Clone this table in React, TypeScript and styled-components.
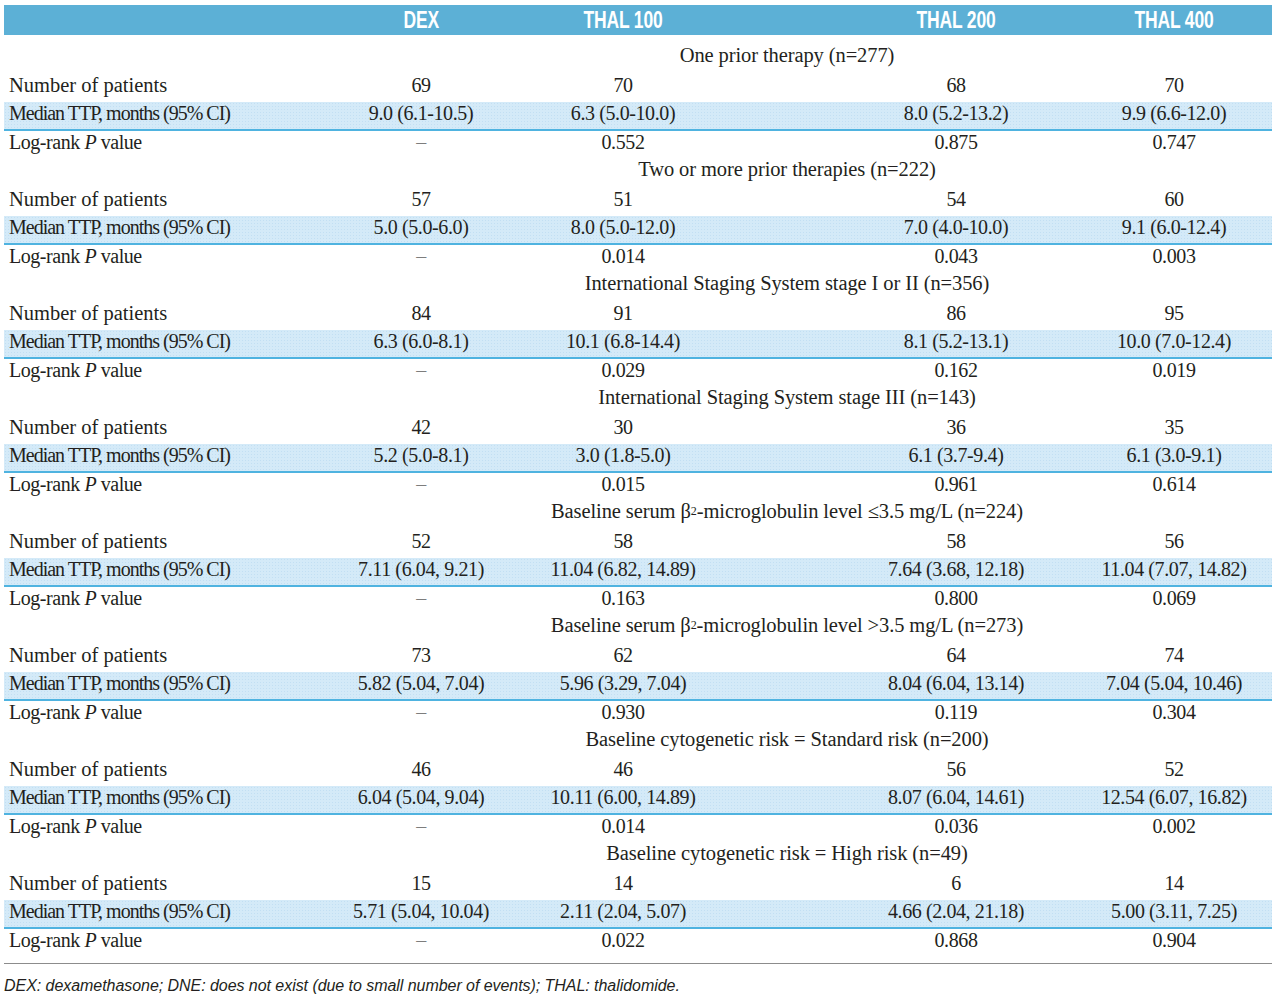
import React from "react";
import styled, { createGlobalStyle } from "styled-components";

const GlobalStyle = createGlobalStyle`
  html, body { margin: 0; padding: 0; background: #ffffff; }
  body { font-family: "Liberation Serif", "Times New Roman", serif; color: #231f20; }
`;

const COLS = "316px 202px 202px 112px 240px 196px";

const Page = styled.div`
  width: 1268px;
  padding: 5px 0 0 4px;
`;

const HeaderRow = styled.div`
  display: grid;
  grid-template-columns: ${COLS};
  height: 30px;
  background: #5cb0d6;
  align-items: center;
  margin-bottom: 10px;
`;

const HeadCell = styled.div<{ $col: number }>`
  grid-column: ${(p) => p.$col};
  text-align: center;
  line-height: 30px;
  padding-bottom: 2px;
`;

const HeadText = styled.span`
  display: inline-block;
  transform: scaleX(0.76);
  color: #ffffff;
  font-family: "Liberation Sans", Arial, sans-serif;
  font-weight: 700;
  font-size: 23px;
  letter-spacing: -0.2px;
`;

const Row = styled.div<{ $band?: boolean }>`
  display: grid;
  grid-template-columns: ${COLS};
  height: 28.5px;
  box-sizing: border-box;
  align-items: center;
  padding-bottom: 8px;
  font-size: 20px;
  background: ${(p) =>
    p.$band
      ? "radial-gradient(circle, rgba(160,205,235,0.35) 0.8px, transparent 1px) 0 0 / 3px 3px, #d4eaf8"
      : "transparent"};
  border-bottom: ${(p) => (p.$band ? "2px solid #4fb3e0" : "none")};
`;

const TitleRow = styled.div`
  height: 28.5px;
  box-sizing: border-box;
  display: flex;
  align-items: center;
  justify-content: center;
  padding: 0 0 8px 298px;
  font-size: 20.5px;
  letter-spacing: -0.1px;
  white-space: nowrap;
`;

type LabelKind = "count" | "median" | "pvalue";

const labelSpacing: Record<LabelKind, string> = {
  count: "0",
  median: "-1px",
  pvalue: "-0.45px",
};

const Label = styled.div<{ $kind: LabelKind }>`
  grid-column: 1;
  padding-left: 5px;
  white-space: nowrap;
  font-size: ${(p) => (p.$kind === "count" ? "20.5px" : "20px")};
  letter-spacing: ${(p) => labelSpacing[p.$kind]};
`;

const Value = styled.div<{ $col: number; $muted?: boolean }>`
  grid-column: ${(p) => p.$col};
  text-align: center;
  white-space: nowrap;
  letter-spacing: -0.4px;
  color: ${(p) => (p.$muted ? "#7d7d7d" : "inherit")};
`;

const Sub = styled.span`
  font-size: 12px;
  vertical-align: -2px;
`;

const Rule = styled.div`
  margin-top: 6px;
  border-top: 1px solid #8c8c8c;
`;

const Footnote = styled.p`
  margin: 0;
  padding-top: 12px;
  font-family: "Liberation Sans", Arial, sans-serif;
  font-style: italic;
  font-size: 16px;
  line-height: 20px;
  letter-spacing: -0.05px;
  color: #231f20;
`;

const DATA_COLS = [2, 3, 5, 6];

type Group = {
  title: React.ReactNode;
  n: string[];
  median: string[];
  p: string[];
};

const beta = (
  <>
    β<Sub>2</Sub>
  </>
);

const groups: Group[] = [
  {
    title: "One prior therapy (n=277)",
    n: ["69", "70", "68", "70"],
    median: ["9.0 (6.1-10.5)", "6.3 (5.0-10.0)", "8.0 (5.2-13.2)", "9.9 (6.6-12.0)"],
    p: ["0.552", "0.875", "0.747"],
  },
  {
    title: "Two or more prior therapies (n=222)",
    n: ["57", "51", "54", "60"],
    median: ["5.0 (5.0-6.0)", "8.0 (5.0-12.0)", "7.0 (4.0-10.0)", "9.1 (6.0-12.4)"],
    p: ["0.014", "0.043", "0.003"],
  },
  {
    title: "International Staging System stage I or II (n=356)",
    n: ["84", "91", "86", "95"],
    median: ["6.3 (6.0-8.1)", "10.1 (6.8-14.4)", "8.1 (5.2-13.1)", "10.0 (7.0-12.4)"],
    p: ["0.029", "0.162", "0.019"],
  },
  {
    title: "International Staging System stage III (n=143)",
    n: ["42", "30", "36", "35"],
    median: ["5.2 (5.0-8.1)", "3.0 (1.8-5.0)", "6.1 (3.7-9.4)", "6.1 (3.0-9.1)"],
    p: ["0.015", "0.961", "0.614"],
  },
  {
    title: <>Baseline serum {beta}-microglobulin level ≤3.5 mg/L (n=224)</>,
    n: ["52", "58", "58", "56"],
    median: ["7.11 (6.04, 9.21)", "11.04 (6.82, 14.89)", "7.64 (3.68, 12.18)", "11.04 (7.07, 14.82)"],
    p: ["0.163", "0.800", "0.069"],
  },
  {
    title: <>Baseline serum {beta}-microglobulin level &gt;3.5 mg/L (n=273)</>,
    n: ["73", "62", "64", "74"],
    median: ["5.82 (5.04, 7.04)", "5.96 (3.29, 7.04)", "8.04 (6.04, 13.14)", "7.04 (5.04, 10.46)"],
    p: ["0.930", "0.119", "0.304"],
  },
  {
    title: "Baseline cytogenetic risk = Standard risk (n=200)",
    n: ["46", "46", "56", "52"],
    median: ["6.04 (5.04, 9.04)", "10.11 (6.00, 14.89)", "8.07 (6.04, 14.61)", "12.54 (6.07, 16.82)"],
    p: ["0.014", "0.036", "0.002"],
  },
  {
    title: "Baseline cytogenetic risk = High risk (n=49)",
    n: ["15", "14", "6", "14"],
    median: ["5.71 (5.04, 10.04)", "2.11 (2.04, 5.07)", "4.66 (2.04, 21.18)", "5.00 (3.11, 7.25)"],
    p: ["0.022", "0.868", "0.904"],
  },
];

const headers = ["DEX", "THAL 100", "THAL 200", "THAL 400"];

export default function App() {
  return (
    <Page>
      <GlobalStyle />
      <HeaderRow>
        {headers.map((h, i) => (
          <HeadCell key={h} $col={DATA_COLS[i]}>
            <HeadText>{h}</HeadText>
          </HeadCell>
        ))}
      </HeaderRow>
      {groups.map((g, gi) => (
        <React.Fragment key={gi}>
          <TitleRow>{g.title}</TitleRow>
          <Row>
            <Label $kind="count">Number of patients</Label>
            {g.n.map((v, i) => (
              <Value key={i} $col={DATA_COLS[i]}>
                {v}
              </Value>
            ))}
          </Row>
          <Row $band>
            <Label $kind="median">Median TTP, months (95% CI)</Label>
            {g.median.map((v, i) => (
              <Value key={i} $col={DATA_COLS[i]}>
                {v}
              </Value>
            ))}
          </Row>
          <Row>
            <Label $kind="pvalue">
              Log-rank <i>P</i> value
            </Label>
            <Value $col={2} $muted>
              –
            </Value>
            {g.p.map((v, i) => (
              <Value key={i} $col={DATA_COLS[i + 1]}>
                {v}
              </Value>
            ))}
          </Row>
        </React.Fragment>
      ))}
      <Rule />
      <Footnote>
        DEX: dexamethasone; DNE: does not exist (due to small number of events); THAL: thalidomide.
      </Footnote>
    </Page>
  );
}
